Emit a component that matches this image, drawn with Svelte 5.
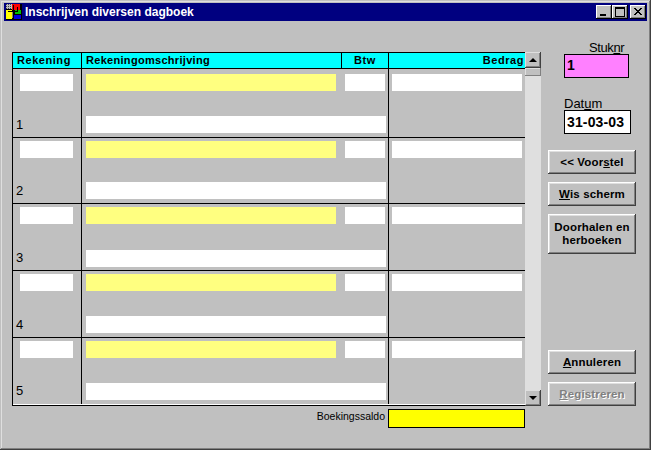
<script lang="ts">
	// the rows in the original are not all the same height
	const rows = [
		{ n: 1, height: 69, top: 5, bottom: 4, digit: 6 },
		{ n: 2, height: 66, top: 3, bottom: 4, digit: 6 },
		{ n: 3, height: 67, top: 3, bottom: 3, digit: 6 },
		{ n: 4, height: 67, top: 3, bottom: 4, digit: 6 },
		{ n: 5, height: 67, top: 3, bottom: 4, digit: 7 }
	];
</script>

<div class="window">
	<header class="titlebar">
		<svg class="app-icon" width="16" height="16" viewBox="0 0 16 16" shape-rendering="crispEdges">
			<defs>
				<pattern id="dither" width="2" height="2" patternUnits="userSpaceOnUse">
					<rect width="2" height="2" fill="#c0c0c0" />
					<rect width="1" height="1" fill="#404040" />
				</pattern>
			</defs>
			<rect width="16" height="16" fill="#000" />
			<rect x="0" y="0" width="6" height="5" fill="url(#dither)" />
			<rect x="6" y="0" width="8" height="6" fill="#ff0000" />
			<rect x="0" y="6" width="6" height="9" fill="#ffff00" />
			<rect x="9" y="6" width="6" height="4" fill="#00c000" />
			<rect x="8" y="11" width="7" height="4" fill="#0000e0" />
			<rect x="6" y="7" width="2" height="7" fill="#808080" />
			<path d="M7 1h1v13H7zM2 7h9v1H2zM11 3h1v5h-1z" fill="#000" />
		</svg>
		<span class="title">Inschrijven diversen dagboek</span>
		<div class="caption-buttons">
			<button class="caption" aria-label="Minimaliseren">
				<svg width="10" height="10" viewBox="0 0 10 10" shape-rendering="crispEdges"><rect x="1" y="7" width="6" height="2" /></svg>
			</button>
			<button class="caption" aria-label="Maximaliseren">
				<svg width="10" height="10" viewBox="0 0 10 10" shape-rendering="crispEdges"><path d="M0 0h10v10H0zM1 2v7h8V2z" fill-rule="evenodd" /></svg>
			</button>
			<button class="caption close" aria-label="Sluiten">
				<svg width="10" height="10" viewBox="0 0 10 10" shape-rendering="crispEdges"><path d="M1 1h2v1h1v1h2V2h1V1h2v1H8v1H7v1H6v1h1v1h1v1h1v1H7V7H6V6H4v1H3v1H1V7h1V6h1V5h1V4H3V3H2V2H1z" /></svg>
			</button>
		</div>
	</header>

	<main class="body">
		<section class="left">
			<div class="grid-wrap">
				<div class="table">
					<div class="thead">
						<div>Rekening</div>
						<div class="tight">Rekeningomschrijving</div>
						<div class="center">Btw</div>
						<div class="right">Bedrag</div>
					</div>
					{#each rows as row}
						<div class="row" style:height="{row.height}px">
							<div class="cell first" style:padding-top="{row.top}px" style:padding-bottom="{row.digit}px">
								<div class="input white rek"></div>
								<span class="num">{row.n}</span>
							</div>
							<div class="cell wide" style:padding-top="{row.top}px" style:padding-bottom="{row.bottom}px">
								<div class="top-line">
									<div class="input yellow desc"></div>
									<div class="input white btw"></div>
								</div>
								<div class="input white desc2"></div>
							</div>
							<div class="cell amount" style:padding-top="{row.top}px">
								<div class="input white bedrag"></div>
							</div>
						</div>
					{/each}
				</div>
				<div class="scrollbar">
					<button class="sb-btn" aria-label="Omhoog"><span class="arrow up"></span></button>
					<div class="thumb"></div>
					<div class="track"></div>
					<button class="sb-btn" aria-label="Omlaag"><span class="arrow down"></span></button>
				</div>
			</div>
			<div class="saldo">
				<span class="saldo-label">Boekingssaldo</span>
				<div class="saldo-box"></div>
			</div>
		</section>

		<aside class="side">
			<label class="stuknr-label" for="stuknr">Stuk<u>n</u>r</label>
			<div class="box pink" id="stuknr">1</div>
			<label class="datum-label" for="datum">Dat<u>u</u>m</label>
			<div class="box date" id="datum">31-03-03</div>
			<button class="btn first-btn">&lt;&lt; Voor<u>s</u>tel</button>
			<button class="btn"><u>W</u>is scherm</button>
			<button class="btn tall">Doorhalen en<br />herboeken</button>
			<div class="spacer"></div>
			<button class="btn"><u>A</u>nnuleren</button>
			<button class="btn disabled"><u>R</u>egistreren</button>
		</aside>
	</main>
</div>

<style>
	:global(body) {
		margin: 0;
		background: #c0c0c0;
	}

	.window {
		box-sizing: border-box;
		width: 651px;
		height: 450px;
		padding: 3px 4px 4px;
		background: #c0c0c0;
		font-family: 'Liberation Sans', Arial, sans-serif;
		font-size: 12px;
		color: #000;
		box-shadow:
			inset -1px -1px #404040,
			inset 1px 1px #c0c0c0,
			inset -2px -2px #808080,
			inset 2px 2px #dfdfdf;
		overflow: hidden;
	}

	.titlebar {
		display: flex;
		align-items: center;
		height: 18px;
		background: #000080;
		color: #fff;
	}

	.app-icon {
		margin-left: 2px;
		flex: none;
	}

	.title {
		margin-left: 3px;
		font-weight: 700;
		font-size: 12px;
		white-space: nowrap;
	}

	.caption-buttons {
		display: flex;
		margin-left: auto;
		margin-right: 1px;
	}

	.caption {
		box-sizing: border-box;
		width: 16px;
		height: 14px;
		padding: 0;
		display: flex;
		align-items: center;
		justify-content: center;
		border: 0;
		background: #c0c0c0;
		box-shadow:
			inset -1px -1px #000,
			inset 1px 1px #fff,
			inset -2px -2px #808080;
	}

	.close {
		margin-left: 2px;
	}

	.body {
		display: flex;
		padding: 31px 0 0 8px;
	}

	.left {
		width: 529px;
		flex: none;
	}

	.grid-wrap {
		display: flex;
	}

	.table {
		box-sizing: border-box;
		width: 513px;
		height: 354px;
		border-top: 1px solid #000;
		border-left: 1px solid #000;
		border-bottom: 1px solid #000;
	}

	.thead {
		display: grid;
		grid-template-columns: 69px 260px 47px 136px;
		height: 15px;
		background: #00ffff;
		border-bottom: 1px solid #000;
		font-weight: 700;
		font-size: 11px;
		letter-spacing: 0.55px;
		line-height: 14px;
	}

	.thead > div {
		box-sizing: border-box;
		padding: 0 4px;
		border-right: 1px solid #000;
		white-space: nowrap;
	}

	.thead > div:last-child {
		border-right: 0;
		padding-right: 1px;
	}

	.thead > .tight {
		letter-spacing: 0.3px;
	}

	.center {
		text-align: center;
	}

	.right {
		text-align: right;
	}

	.row {
		box-sizing: border-box;
		display: grid;
		grid-template-columns: 69px 307px 136px;
		border-bottom: 1px solid #000;
	}

	.row:last-child {
		border-bottom-color: #fff;
	}

	.cell {
		box-sizing: border-box;
		border-right: 1px solid #000;
	}

	.cell.first {
		display: flex;
		flex-direction: column;
		justify-content: space-between;
		padding-left: 7px;
	}

	.num {
		margin-left: -4px;
		margin-bottom: 1px;
		font-size: 13px;
		line-height: 10px;
	}

	.cell.wide {
		display: flex;
		flex-direction: column;
		justify-content: space-between;
		padding-left: 4px;
	}

	.top-line {
		display: flex;
		gap: 9px;
	}

	.cell.amount {
		border-right: 0;
		padding-left: 3px;
	}

	.input {
		height: 17px;
		flex: none;
	}

	.white {
		background: #fff;
	}

	.yellow {
		background: #ffff80;
	}

	.rek {
		width: 53px;
	}

	.desc {
		width: 250px;
	}

	.btw {
		width: 40px;
	}

	.desc2 {
		width: 300px;
	}

	.bedrag {
		width: 130px;
	}

	.scrollbar {
		width: 16px;
		height: 354px;
		display: flex;
		flex-direction: column;
		background: #dfdfdf;
	}

	.sb-btn,
	.thumb {
		box-sizing: border-box;
		width: 16px;
		padding: 0;
		border: 0;
		background: #c0c0c0;
		box-shadow:
			inset -1px -1px #404040,
			inset 1px 1px #dfdfdf,
			inset -2px -2px #808080;
	}

	.sb-btn {
		height: 16px;
		display: flex;
		align-items: center;
		justify-content: center;
	}

	.thumb {
		height: 8px;
		box-shadow:
			inset -1px -1px #808080,
			inset 1px 1px #dfdfdf;
	}

	.track {
		flex: 1;
	}

	.arrow {
		width: 0;
		height: 0;
		border-left: 4px solid transparent;
		border-right: 4px solid transparent;
	}

	.arrow.up {
		border-bottom: 4px solid #000;
	}

	.arrow.down {
		border-top: 4px solid #000;
	}

	.saldo {
		display: flex;
		justify-content: flex-end;
		align-items: flex-start;
		gap: 3px;
		margin-top: 3px;
		padding-right: 16px;
		font-size: 10.5px;
		line-height: 13px;
	}

	.saldo-label {
		padding-top: 1px;
	}

	.saldo-box {
		box-sizing: border-box;
		width: 137px;
		height: 19px;
		background: #ffff00;
		border: 1px solid #000;
	}

	.side {
		display: flex;
		flex-direction: column;
		align-items: flex-start;
		margin-left: 7px;
		width: 88px;
		height: 373px;
		margin-top: -11px;
	}

	.stuknr-label,
	.datum-label {
		font-size: 13px;
		line-height: 13px;
	}

	.stuknr-label {
		margin-left: 41px;
		letter-spacing: -0.4px;
	}

	.datum-label {
		margin-top: 19px;
		margin-left: 16px;
	}

	.box {
		box-sizing: border-box;
		margin-left: 16px;
		height: 24px;
		border: 1px solid #000;
		padding: 0 2px;
		font-weight: 700;
		font-size: 14px;
		letter-spacing: 0.15px;
	}

	.pink {
		width: 65px;
		background: #ff80ff;
		line-height: 20px;
	}

	.date {
		width: 67px;
		background: #fff;
		line-height: 23px;
	}

	.btn {
		box-sizing: border-box;
		flex: none;
		width: 88px;
		height: 24px;
		margin-bottom: 8px;
		padding: 0;
		border: 0;
		background: #c0c0c0;
		font-family: inherit;
		font-weight: 700;
		font-size: 11.5px;
		letter-spacing: 0.15px;
		line-height: 13px;
		color: #000;
		box-shadow:
			inset -1px -1px #404040,
			inset 1px 1px #fff,
			inset -2px -2px #808080,
			inset 2px 2px #dfdfdf;
	}

	.first-btn {
		margin-top: 16px;
	}

	.tall {
		height: 40px;
	}

	.spacer {
		flex: 1;
	}

	.disabled {
		color: #808080;
		text-shadow: 1px 1px #fff;
	}
</style>
